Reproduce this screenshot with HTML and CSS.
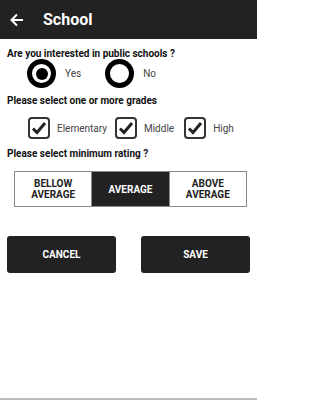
FILE: index.html
```html
<!DOCTYPE html>
<html>
<head>
<meta charset="utf-8">
<link rel="stylesheet" href="styles.css">
</head>
<body>
<div class="screen">
  <header class="appbar">
    <svg class="back" width="14" height="14" viewBox="0 0 14 14"><path d="M13 7H2M7 1.5L1.5 7L7 12.5" fill="none" stroke="#fff" stroke-width="2"/></svg>
    <span class="title">School</span>
  </header>
  <main class="content">
    <div class="label q1">Are you interested in public schools ?</div>
    <div class="radios">
      <div class="radio-item">
        <span class="radio checked"><span class="dot"></span></span>
        <span class="opt">Yes</span>
      </div>
      <div class="radio-item">
        <span class="radio"></span>
        <span class="opt">No</span>
      </div>
    </div>
    <div class="label q2">Please select one or more grades</div>
    <div class="checks">
      <div class="check-item">
        <svg class="cb" width="22" height="22" viewBox="0 0 22 22"><rect x="1" y="1" width="20" height="20" rx="3" fill="none" stroke="#333" stroke-width="2"/><path d="M5 11.5L9 15.5L17 6" fill="none" stroke="#222" stroke-width="3"/></svg>
        <span class="opt">Elementary</span>
      </div>
      <div class="check-item">
        <svg class="cb" width="22" height="22" viewBox="0 0 22 22"><rect x="1" y="1" width="20" height="20" rx="3" fill="none" stroke="#333" stroke-width="2"/><path d="M5 11.5L9 15.5L17 6" fill="none" stroke="#222" stroke-width="3"/></svg>
        <span class="opt">Middle</span>
      </div>
      <div class="check-item">
        <svg class="cb" width="22" height="22" viewBox="0 0 22 22"><rect x="1" y="1" width="20" height="20" rx="3" fill="none" stroke="#333" stroke-width="2"/><path d="M5 11.5L9 15.5L17 6" fill="none" stroke="#222" stroke-width="3"/></svg>
        <span class="opt">High</span>
      </div>
    </div>
    <div class="label q3">Please select minimum rating ?</div>
    <div class="segments">
      <div class="seg">BELLOW<br>AVERAGE</div>
      <div class="seg active">AVERAGE</div>
      <div class="seg">ABOVE<br>AVERAGE</div>
    </div>
    <div class="actions">
      <button class="btn">CANCEL</button>
      <button class="btn">SAVE</button>
    </div>
  </main>
  <div class="spacer"></div>
  <div class="bottom-line"></div>
</div>
</body>
</html>
```
FILE: styles.css
```css
html, body {
  margin: 0;
  padding: 0;
  background: #fff;
}
body {
  font-family: Roboto, "Noto Sans", sans-serif;
  color: #111;
}
.screen {
  width: 257px;
  height: 400px;
  display: flex;
  flex-direction: column;
}
.appbar {
  height: 39px;
  background: #222222;
  display: flex;
  align-items: center;
  padding-left: 10px;
  box-sizing: border-box;
}
.back {
  margin-top: 1px;
}
.title {
  color: #fff;
  font-weight: 700;
  font-size: 16px;
  margin-left: 19px;
}
.content {
  padding: 0 7px;
  display: flex;
  flex-direction: column;
}
.label {
  font-weight: 700;
  font-size: 10px;
  line-height: 12px;
  color: #111;
}
.q1 { margin-top: 9px; }
.q2 { margin-top: 7px; }
.q3 { margin-top: 9px; }
.radios {
  display: flex;
  padding-left: 20px;
  margin-top: -1px;
  gap: 24px;
}
.radio-item, .check-item {
  display: flex;
  align-items: center;
}
.radio {
  width: 29px;
  height: 29px;
  box-sizing: border-box;
  border: 5px solid #000;
  border-radius: 50%;
  display: flex;
  align-items: center;
  justify-content: center;
}
.dot {
  width: 12px;
  height: 12px;
  border-radius: 50%;
  background: #000;
}
.opt {
  font-size: 10px;
  color: #444;
  margin-left: 9px;
}
.checks {
  display: flex;
  padding-left: 21px;
  margin-top: 10px;
  gap: 8px;
}
.check-item .opt {
  margin-left: 7px;
}
.check-item:nth-child(3) { margin-left: 2px; }
.segments {
  display: flex;
  margin: 11px 3px 0 7px;
  height: 36px;
  border: 1px solid #888;
  box-sizing: border-box;
}
.seg {
  flex: 1;
  display: flex;
  align-items: center;
  justify-content: center;
  text-align: center;
  font-size: 10px;
  font-weight: 700;
  line-height: 11px;
  color: #222;
}
.seg + .seg {
  border-left: 1px solid #888;
}
.seg.active {
  background: #222;
  color: #fff;
}
.actions {
  display: flex;
  justify-content: space-between;
  margin-top: 29px;
}
.btn {
  width: 109px;
  height: 37px;
  background: #222;
  color: #fff;
  border: none;
  border-radius: 3px;
  font-family: Roboto, sans-serif;
  font-weight: 700;
  font-size: 10px;
  padding: 0;
}
.spacer { flex: 1; }
.bottom-line {
  height: 2px;
  background: #bdbdbd;
}
```
